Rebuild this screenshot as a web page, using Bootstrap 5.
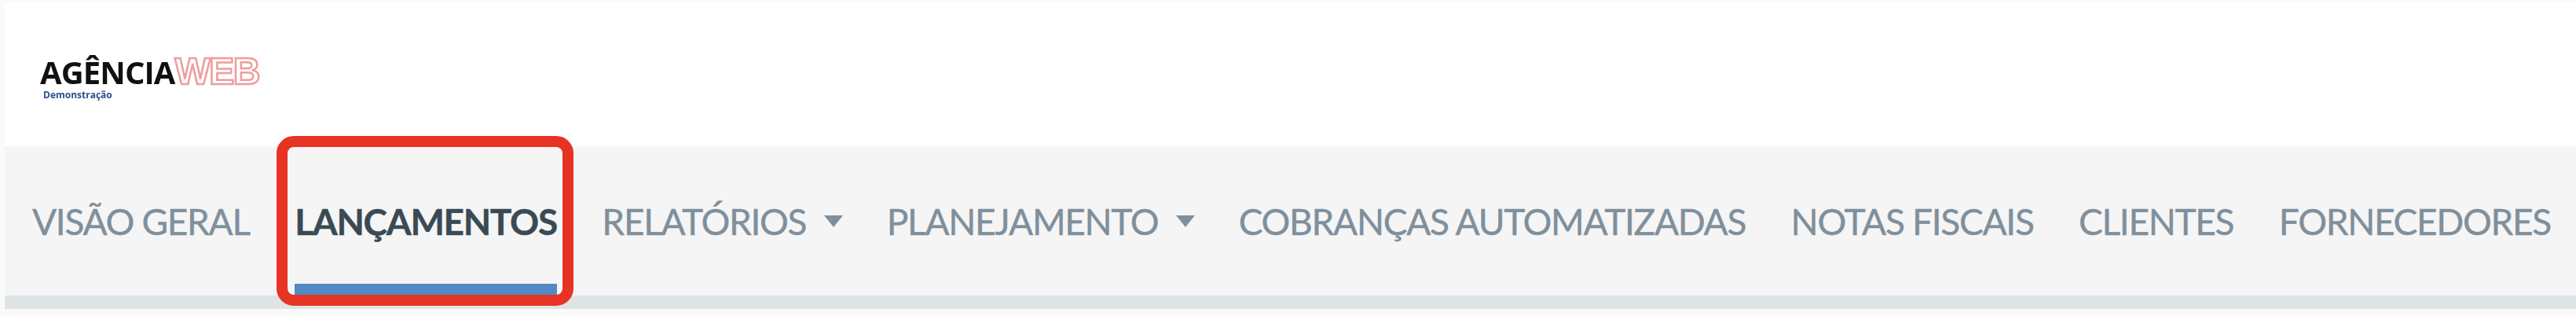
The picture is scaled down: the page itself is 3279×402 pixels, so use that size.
<!DOCTYPE html>
<html lang="pt-BR">
<head>
    <meta charset="UTF-8">
    <meta name="viewport" content="width=device-width, initial-scale=1.0">
    <title>Lançamentos</title>
    <link href="https://cdn.jsdelivr.net/npm/bootstrap@5.3.3/dist/css/bootstrap.min.css" rel="stylesheet" crossorigin="anonymous">
    <script src="https://cdn.jsdelivr.net/npm/bootstrap@5.3.3/dist/js/bootstrap.bundle.min.js" crossorigin="anonymous"></script>
    <style>
        html, body { height: 402px; overflow: hidden; }
        body { background: #fafafa; padding: 3px 0 0 6px; font-family: Lato, "Liberation Sans", sans-serif; }
        .top-logo { height: 183px; background: #fff; padding: 67px 0 0 45px; }
        .logo-line { font-family: "Open Sans", "Liberation Sans", sans-serif; font-weight: 700; font-size: 40px; line-height: 42px; color: #111; letter-spacing: -.9px; filter: blur(.7px); }
        .logo-web { vertical-align: -2px; font-family: "Liberation Sans", sans-serif; font-weight: 700; font-size: 48px; line-height: 42px; letter-spacing: -1.5px; color: #fff; -webkit-text-stroke: 2.5px #ef9c9c; }
        .logo-sub { font-family: "Open Sans", "Liberation Sans", sans-serif; font-weight: 700; font-size: 12px; line-height: 14px; color: #2d4f8e; margin: 1px 0 0 4px; filter: blur(.5px); }
        .menu-bar { height: 190px; background: #f5f5f5; padding-left: 35px; gap: 57.5px; }
        .menu-bar .nav-link { display: flex; align-items: center; height: 100%; padding: 0; font-size: 46px; letter-spacing: -1.3px; color: #7f909c; -webkit-text-stroke: .4px #7f909c; border-top: 15px solid transparent; border-bottom: 15px solid transparent; white-space: pre; }
        .menu-bar .nav-link.active { color: #3a4a54; font-weight: 700; -webkit-text-stroke: .4px #3a4a54; border-bottom-color: #5389c4; }
        .menu-caret { width: 0; height: 0; margin: 0 -2px 0 23px; border-left: 12.5px solid transparent; border-right: 12.5px solid transparent; border-top: 15px solid #7f909c; }
        .band { height: 17px; background: #dee3e6; }
        .mark-box { position: absolute; left: 352px; top: 173px; width: 378px; height: 216px; border: 14px solid #e63323; border-radius: 22px; }
    </style>
</head>
<body>
    <div class="top-logo">
        <div class="logo-line d-flex align-items-baseline"><span>AGÊNCIA</span><span class="logo-web">WEB</span></div>
        <div class="logo-sub">Demonstração</div>
    </div>
    <nav class="nav menu-bar flex-nowrap">
        <a class="nav-link" href="#">VISÃO GERAL</a>
        <a class="nav-link active" href="#">LANÇAMENTOS</a>
        <a class="nav-link" href="#">RELATÓRIOS<span class="menu-caret"></span></a>
        <a class="nav-link" href="#">PLANEJAMENTO<span class="menu-caret"></span></a>
        <a class="nav-link" href="#">COBRANÇAS AUTOMATIZADAS</a>
        <a class="nav-link" href="#">NOTAS FISCAIS</a>
        <a class="nav-link" href="#">CLIENTES</a>
        <a class="nav-link" href="#">FORNECEDORES</a>
    </nav>
    <div class="band"></div>
    <div class="mark-box"></div>
</body>
</html>
